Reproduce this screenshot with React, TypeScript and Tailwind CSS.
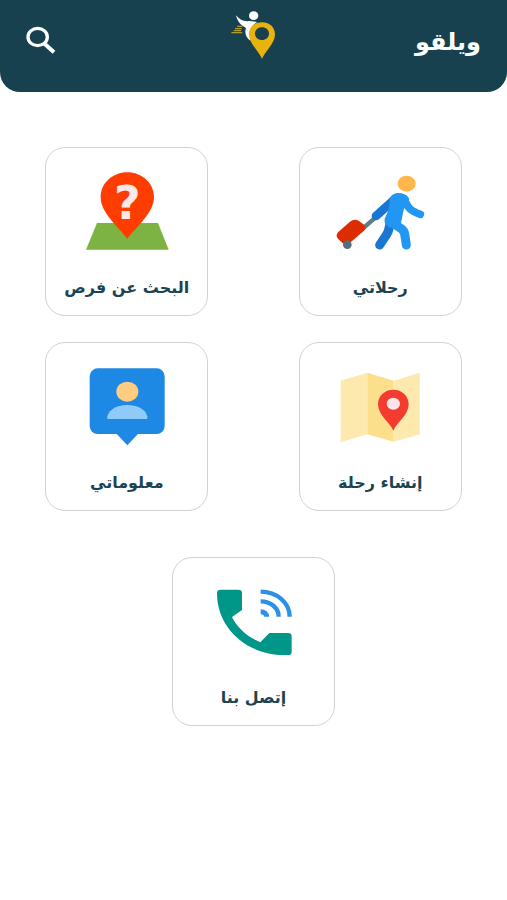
import type { ReactNode } from "react";

const iconClass = "w-[100px] h-[90px]";

const Logo = () => (
  <svg viewBox="10 3 150 150" className="w-[50px] h-[50px]" role="img" aria-label="logo">
    <ellipse cx="84" cy="17" rx="14" ry="13" fill="#fff" />
    <path
      d="M31 16 C42 30 54 35 72 33 L94 36 C82 44 74 54 72 66 L74 92 C60 82 56 68 61 54 C46 46 35 35 31 16 Z"
      fill="#fff"
    />
    <path d="M34 49 H50 M28 56 H48 M24 62 H46 M17 68 H50" stroke="#b29a2c" strokeWidth="4" />
    <path
      fillRule="evenodd"
      d="M109 147 C103 128 70 99 70 74 C70 51 87 37 109 37 C131 37 148 51 148 74 C148 99 115 128 109 147 Z M109 52 C97 52 88 60 88 71 C88 81 97 90 109 90 C121 90 130 81 130 71 C130 60 121 52 109 52 Z"
      fill="#e9b30f"
    />
  </svg>
);

const SearchIcon = () => (
  <svg viewBox="0 0 90 84" className="w-[30px] h-[28px]" fill="none" stroke="#fff" aria-hidden="true">
    <ellipse cx="35" cy="33" rx="29" ry="26" strokeWidth="10" />
    <path d="M54 52 L84 79" strokeWidth="12" />
  </svg>
);

const TravelIcon = () => (
  <svg viewBox="0 0 300 270" className={iconClass} fill="none" aria-hidden="true">
    <path d="M136 149 L98 182" stroke="#607d8b" strokeWidth="13" />
    <path
      d="M25 192 L60 161 Q72 151 86 158 L102 170 Q111 178 102 188 L62 223 Q49 233 35 223 L24 212 Q15 202 25 192 Z"
      fill="#dd2c00"
    />
    <circle cx="52" cy="230" r="13" fill="#546e7a" />
    <path d="M189 98 L138 144" stroke="#1976d2" strokeWidth="26" strokeLinecap="round" />
    <path
      d="M179 171 Q177 192 165 207 L149 231"
      stroke="#1976d2"
      strokeWidth="27"
      strokeLinecap="round"
      strokeLinejoin="round"
    />
    <path
      d="M205 75 C192 75 183 82 179 92 C180 118 172 136 164 152 C162 166 169 176 184 180 L213 165 L221 125 L238 92 C229 80 218 75 205 75 Z"
      fill="#2196f3"
    />
    <path
      d="M223 92 C233 121 244 130 271 139"
      stroke="#2196f3"
      strokeWidth="23"
      strokeLinecap="round"
    />
    <path
      d="M184 162 L214 182 Q222 188 224 198 L229 231"
      stroke="#2196f3"
      strokeWidth="27"
      strokeLinecap="round"
      strokeLinejoin="round"
    />
    <ellipse cx="230" cy="47" rx="27" ry="24" fill="#ffb74d" />
  </svg>
);

const SearchPlaceIcon = () => (
  <svg viewBox="0 0 300 270" className={iconClass} aria-hidden="true">
    <path d="M60 165 H243 L275 245 H27 Z" fill="#7cb342" />
    <path
      d="M151 213 C124 176 71 135 71 88 C71 45 107 13 151 13 C195 13 231 45 231 88 C231 135 178 176 151 213 Z"
      fill="#ff3d00"
    />
    <text
      x="151"
      y="153"
      textAnchor="middle"
      className="font-['DejaVu_Sans',sans-serif] text-[138px] font-bold"
      fill="#fbe9e7"
    >
      ?
    </text>
  </svg>
);

const MapIcon = () => (
  <svg viewBox="0 0 300 270" className={iconClass} aria-hidden="true">
    <path d="M32 53 L112 29 V214 L32 238 Z" fill="#fde9ae" />
    <path d="M112 29 L191 53 V236 L112 214 Z" fill="#fbdf8a" />
    <path d="M191 53 L269 29 V214 L191 236 Z" fill="#fde9ae" />
    <path
      d="M190 203 C180 178 144 157 144 123 C144 99 164 80 190 80 C216 80 236 99 236 123 C236 157 200 178 190 203 Z"
      fill="#f33b30"
    />
    <ellipse cx="190" cy="122" rx="20" ry="18" fill="#fde4ea" />
  </svg>
);

const ProfileIcon = () => (
  <svg viewBox="0 0 300 270" className={iconClass} aria-hidden="true">
    <rect x="38" y="16" width="225" height="197" rx="24" fill="#1e88e5" />
    <path d="M117 211 H185 L151 247 Z" fill="#1e88e5" />
    <ellipse cx="151" cy="86" rx="33" ry="30" fill="#ffcc80" />
    <path d="M91 168 V160 C97 137 123 126 151 126 C179 126 205 137 211 160 V168 Z" fill="#90caf9" />
  </svg>
);

const PhoneIcon = () => (
  <svg viewBox="0 0 300 270" className={iconClass} fill="none" aria-hidden="true">
    <path
      d="M39 45 Q39 35 50 35 H103 Q114 35 114 45 V96 L84 117 C99 148 130 177 169 193 L196 165 H252 Q263 165 263 175 V221 Q263 231 252 231 C135 236 39 155 39 45 Z"
      fill="#009688"
    />
    <g stroke="#2c8fe8" strokeWidth="13">
      <path d="M170 41 C218 41 257 74 257 116" />
      <path d="M170 70 C200 70 224 90 224 116" />
      <path d="M170 101 C181 101 188 107 188 116" strokeWidth="15" />
    </g>
  </svg>
);

type CardProps = { href: string; label: string; children: ReactNode };

const MenuCard = ({ href, label, children }: CardProps) => (
  <a
    href={href}
    className="flex h-[169px] w-[163px] flex-col items-center rounded-[20px] border border-[#d2d2d2] bg-white pt-5"
  >
    {children}
    <span className="mt-4 text-base leading-7 font-bold text-[#1c4450]">{label}</span>
  </a>
);

const App = () => {
  return (
    <div
      dir="rtl"
      lang="ar"
      className="min-h-screen bg-white font-['DejaVu_Sans',sans-serif]"
    >
      <header className="grid h-[92px] grid-cols-3 items-center rounded-b-[20px] bg-[#17414f] px-[26px] pb-3">
        <h1 className="pt-1 text-2xl leading-8 font-bold text-white">ويلقو</h1>
        <div className="flex justify-center pb-2">
          <Logo />
        </div>
        <button type="button" aria-label="بحث" className="justify-self-end">
          <SearchIcon />
        </button>
      </header>

      <main className="pt-[55px]">
        <nav>
          <div className="flex flex-wrap justify-around gap-y-[26px]">
            <MenuCard href="#trips" label="رحلاتي">
              <TravelIcon />
            </MenuCard>
            <MenuCard href="#search" label="البحث عن فرص">
              <SearchPlaceIcon />
            </MenuCard>
          </div>
          <div className="mt-[26px] flex flex-wrap justify-around gap-y-[26px]">
            <MenuCard href="#create" label="إنشاء رحلة">
              <MapIcon />
            </MenuCard>
            <MenuCard href="#profile" label="معلوماتي">
              <ProfileIcon />
            </MenuCard>
          </div>
          <div className="mt-[46px] flex justify-center">
            <MenuCard href="#contact" label="إتصل بنا">
              <PhoneIcon />
            </MenuCard>
          </div>
        </nav>
      </main>
    </div>
  );
};

export default App;
